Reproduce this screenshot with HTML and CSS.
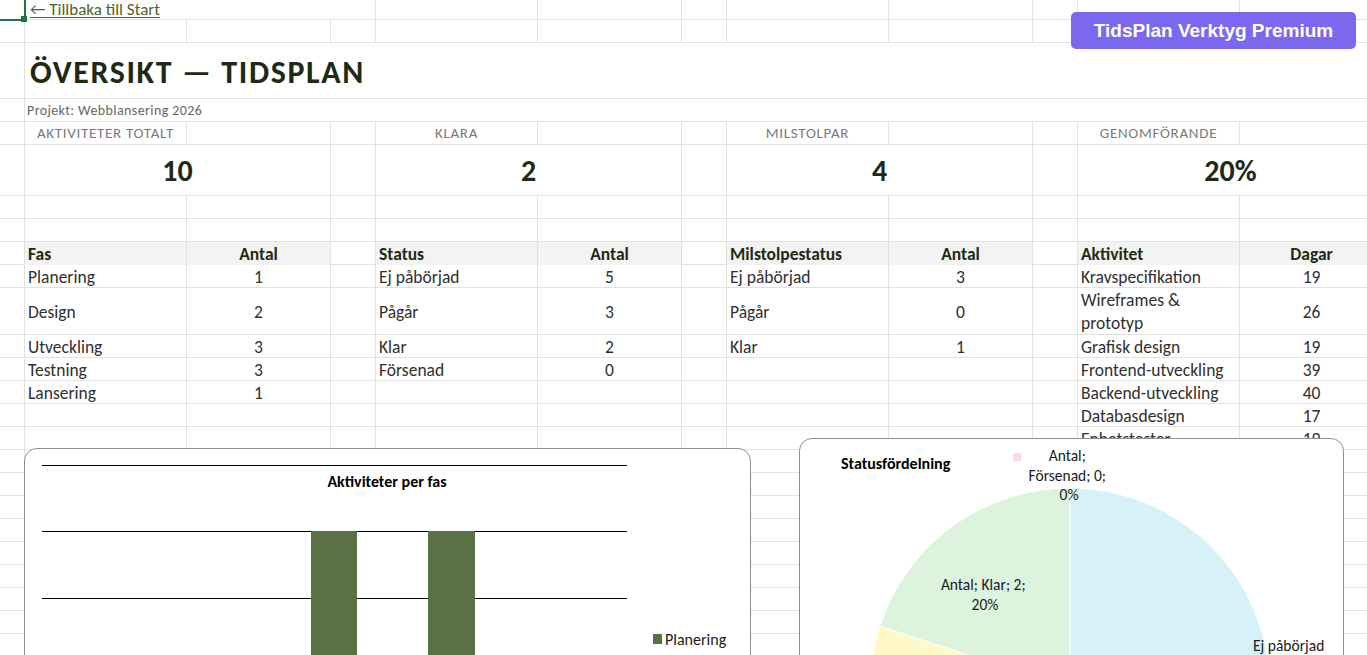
FILE: index.html
```html
<!DOCTYPE html>
<html lang="sv">
<head>
<meta charset="utf-8">
<title>Översikt — Tidsplan</title>
<link rel="stylesheet" href="styles.css">
</head>
<body>
<div class="workbook">
  <div class="sheet">
    <div class="row h20">
      <a class="cell link span-bd" href="#">← Tillbaka till Start</a>
    </div>
    <div class="row h23"></div>
    <div class="row h56">
      <div class="cell title span-bl">ÖVERSIKT — TIDSPLAN</div>
    </div>
    <div class="row h23">
      <div class="cell project span-bl">Projekt: Webblansering 2026</div>
    </div>
    <div class="row h23">
      <div class="cell kpi-label col-b">AKTIVITETER TOTALT</div>
      <div class="cell kpi-label col-e">KLARA</div>
      <div class="cell kpi-label col-h">MILSTOLPAR</div>
      <div class="cell kpi-label col-k">GENOMFÖRANDE</div>
    </div>
    <div class="row h51">
      <div class="cell kpi-value span-bc">10</div>
      <div class="cell kpi-value span-ef">2</div>
      <div class="cell kpi-value span-hi">4</div>
      <div class="cell kpi-value span-kl">20%</div>
    </div>
    <div class="row h23"></div>
    <div class="row h23"></div>

    <div class="row h23">
      <div class="cell th col-b">Fas</div>
      <div class="cell th num col-c">Antal</div>
      <div class="cell th col-e">Status</div>
      <div class="cell th num col-f">Antal</div>
      <div class="cell th col-h">Milstolpestatus</div>
      <div class="cell th num col-i">Antal</div>
      <div class="cell th col-k">Aktivitet</div>
      <div class="cell th num col-l">Dagar</div>
    </div>
    <div class="row h23">
      <div class="cell td col-b">Planering</div>
      <div class="cell td num col-c">1</div>
      <div class="cell td col-e">Ej påbörjad</div>
      <div class="cell td num col-f">5</div>
      <div class="cell td col-h">Ej påbörjad</div>
      <div class="cell td num col-i">3</div>
      <div class="cell td col-k">Kravspecifikation</div>
      <div class="cell td num col-l">19</div>
    </div>
    <div class="row h46">
      <div class="cell td col-b">Design</div>
      <div class="cell td num col-c">2</div>
      <div class="cell td col-e">Pågår</div>
      <div class="cell td num col-f">3</div>
      <div class="cell td col-h">Pågår</div>
      <div class="cell td num col-i">0</div>
      <div class="cell td wrap col-k">Wireframes &amp; prototyp</div>
      <div class="cell td num col-l">26</div>
    </div>
    <div class="row h23">
      <div class="cell td col-b">Utveckling</div>
      <div class="cell td num col-c">3</div>
      <div class="cell td col-e">Klar</div>
      <div class="cell td num col-f">2</div>
      <div class="cell td col-h">Klar</div>
      <div class="cell td num col-i">1</div>
      <div class="cell td col-k">Grafisk design</div>
      <div class="cell td num col-l">19</div>
    </div>
    <div class="row h23">
      <div class="cell td col-b">Testning</div>
      <div class="cell td num col-c">3</div>
      <div class="cell td col-e">Försenad</div>
      <div class="cell td num col-f">0</div>
      <div class="cell td col-k">Frontend-utveckling</div>
      <div class="cell td num col-l">39</div>
    </div>
    <div class="row h23">
      <div class="cell td col-b">Lansering</div>
      <div class="cell td num col-c">1</div>
      <div class="cell td col-k">Backend-utveckling</div>
      <div class="cell td num col-l">40</div>
    </div>
    <div class="row h23">
      <div class="cell td col-k">Databasdesign</div>
      <div class="cell td num col-l">17</div>
    </div>
    <div class="row h23">
      <div class="cell td col-k">Enhetstester</div>
      <div class="cell td num col-l">19</div>
    </div>
    <div class="row h23"></div>
    <div class="row h23"></div>
    <div class="row h23"></div>
    <div class="row h23"></div>
    <div class="row h23"></div>
    <div class="row h23"></div>
    <div class="row h23"></div>
    <div class="row h23"></div>
    <div class="row h23"></div>
    <div class="row h23"></div>
  </div>

  <!-- active cell marker on A1 -->
  <div class="selection">
    <span class="sel-right"></span>
    <span class="sel-bottom"></span>
    <span class="sel-handle"></span>
  </div>

  <div class="premium">TidsPlan Verktyg Premium</div>

  <div class="chart chart-phase">
    <svg class="chart-svg" width="725" height="220" viewBox="0 0 725 220">
      <g class="gridlines">
        <line x1="17" y1="16.5" x2="602" y2="16.5"/>
        <line x1="17" y1="82.5" x2="602" y2="82.5"/>
        <line x1="17" y1="149.5" x2="602" y2="149.5"/>
      </g>
      <text class="chart-title" x="362" y="38" text-anchor="middle">Aktiviteter per fas</text>
      <rect class="bar" x="286" y="82" width="46" height="140"/>
      <rect class="bar" x="403" y="82" width="47" height="140"/>
      <rect class="bar" x="628" y="185" width="9" height="10"/>
      <text class="legend" x="640" y="196">Planering</text>
    </svg>
  </div>

  <div class="chart chart-status">
    <svg class="chart-svg" width="543" height="230" viewBox="0 0 543 230">
      <path class="slice-todo" d="M270 249 L270 49 A200 200 0 0 1 270 449 Z"/>
      <path class="slice-doing" d="M270 249 L270 449 A200 200 0 0 1 79.8 187.2 Z"/>
      <path class="slice-done" d="M270 249 L79.8 187.2 A200 200 0 0 1 270 49 Z"/>
      <rect class="slice-late" x="213" y="14" width="8" height="8"/>
      <text class="chart-title" x="41" y="30">Statusfördelning</text>
      <text class="pie-label" text-anchor="middle">
        <tspan x="269" y="22">Antal;</tspan>
        <tspan x="269" y="42">Försenad; 0;</tspan>
        <tspan x="269" y="61">0%</tspan>
      </text>
      <text class="pie-label" text-anchor="middle">
        <tspan x="185" y="151">Antal; Klar; 2;</tspan>
        <tspan x="185" y="171">20%</tspan>
      </text>
      <text class="pie-label" x="453" y="212">Ej påbörjad</text>
    </svg>
  </div>
</div>
</body>
</html>
```

FILE: styles.css
```css
:root {
  --grid: #e1e1e1;
  --ink: #1e2a14;
  --text: #2f2f2f;
  --muted: #7a7a7a;
  --xl: "Carlito", "Lato", "Noto Sans", sans-serif;
}

* { box-sizing: border-box; }

html, body {
  margin: 0;
  padding: 0;
  background: #ffffff;
  overflow: hidden;
}

.workbook {
  position: relative;
  width: 1367px;
  height: 655px;
  overflow: hidden;
  font-family: var(--xl);
  color: var(--text);
}

/* the worksheet: column gridlines come from a repeating tile,
   row gridlines from each row's bottom border */
.sheet {
  display: flex;
  flex-direction: column;
  width: 1440px;
  background-color: #ffffff;
  background-image: linear-gradient(to right,
    transparent 161px, var(--grid) 161px, var(--grid) 162px,
    transparent 162px, transparent 305px, var(--grid) 305px, var(--grid) 306px,
    transparent 306px, transparent 350px, var(--grid) 350px);
  background-size: 351px 100%;
  background-position: 25px 0;
  background-repeat: repeat-x;
}

.row {
  display: grid;
  grid-template-columns: 25px repeat(4, 162px 144px 45px);
  border-bottom: 1px solid var(--grid);
  flex: none;
}

.h20 { height: 20px; }
.h23 { height: 23px; }
.h46 { height: 47px; }
.h51 { height: 51px; }
.h56 { height: 56px; }

.cell {
  display: flex;
  align-items: center;
  padding: 0 3px;
  border-right: 1px solid var(--grid);
  white-space: nowrap;
  min-width: 0;
}

.col-b { grid-column: 2; }
.col-c { grid-column: 3; }
.col-e { grid-column: 5; }
.col-f { grid-column: 6; }
.col-h { grid-column: 8; }
.col-i { grid-column: 9; }
.col-k { grid-column: 11; }
.col-l { grid-column: 12; }

/* merged ranges hide the gridlines inside them */
.span-bc, .span-bd, .span-ef, .span-hi, .span-kl, .span-bl { background: #ffffff; }
.span-bc { grid-column: 2 / 4; }
.span-bd { grid-column: 2 / 5; }
.span-ef { grid-column: 5 / 7; }
.span-hi { grid-column: 8 / 10; }
.span-kl { grid-column: 11 / 13; }
.span-bl { grid-column: 2 / 14; border-right: 0; }

.link {
  font-size: 17px;
  color: #4f6228;
  text-decoration: underline;
  text-decoration-thickness: 1px;
  text-underline-offset: 2px;
  padding-left: 5px;
  align-items: flex-end;
  padding-bottom: 0;
  line-height: 19px;
}

.title {
  font-size: 32px;
  font-weight: 700;
  letter-spacing: 1.6px;
  color: var(--ink);
  padding-left: 5px;
  padding-top: 4px;
}

.project {
  font-size: 14px;
  letter-spacing: 0.4px;
  color: #666666;
  padding-left: 2px;
}

.kpi-label {
  justify-content: center;
  font-size: 15px;
  letter-spacing: 0.7px;
  color: var(--muted);
}

.kpi-value {
  justify-content: center;
  font-size: 30px;
  font-weight: 700;
  color: var(--ink);
}

.th, .td { padding-top: 1px; }

.th {
  background: #f3f3f3;
  font-weight: 700;
  font-size: 17.5px;
  color: var(--ink);
}

.td {
  font-size: 17.5px;
  color: var(--text);
}

.num { justify-content: center; }

.wrap {
  white-space: normal;
  line-height: 23px;
}

/* active-cell marker */
.selection span {
  position: absolute;
  background: #217346;
}
.sel-right { left: 24px; top: 0; width: 2px; height: 16px; }
.sel-bottom { left: 0; top: 19px; width: 21px; height: 2px; }
.sel-handle { left: 21px; top: 16px; width: 6px; height: 6px; }

.premium {
  position: absolute;
  left: 1071px;
  top: 12px;
  width: 285px;
  height: 37px;
  border-radius: 5px;
  background: #7b68ee;
  color: #ffffff;
  font-family: "Liberation Sans", Arial, sans-serif;
  font-weight: 700;
  font-size: 19px;
  display: flex;
  align-items: center;
  justify-content: center;
}

/* floating chart objects */
.chart {
  position: absolute;
  background: #ffffff;
  border: 1px solid #8e8e8e;
  border-radius: 13px;
  overflow: hidden;
}
.chart-phase { left: 24px; top: 448px; width: 727px; height: 240px; }
.chart-status { left: 799px; top: 438px; width: 545px; height: 240px; }

.chart-svg {
  display: block;
  font-family: var(--xl);
}

.gridlines line { stroke: #000000; stroke-width: 1; }

.bar { fill: #5a7243; }

.chart-title {
  font-size: 16px;
  font-weight: 700;
  fill: #000000;
}

.legend {
  font-size: 16px;
  fill: #1a1a1a;
}

.slice-todo { fill: #d7f1f8; stroke: #ffffff; stroke-width: 1; }
.slice-doing { fill: #fff8c9; stroke: #ffffff; stroke-width: 1; }
.slice-done { fill: #dcf3de; stroke: #ffffff; stroke-width: 1; }
.slice-late { fill: #f9dbe1; }

.pie-label {
  font-size: 15.5px;
  fill: #1a1a1a;
}
```
